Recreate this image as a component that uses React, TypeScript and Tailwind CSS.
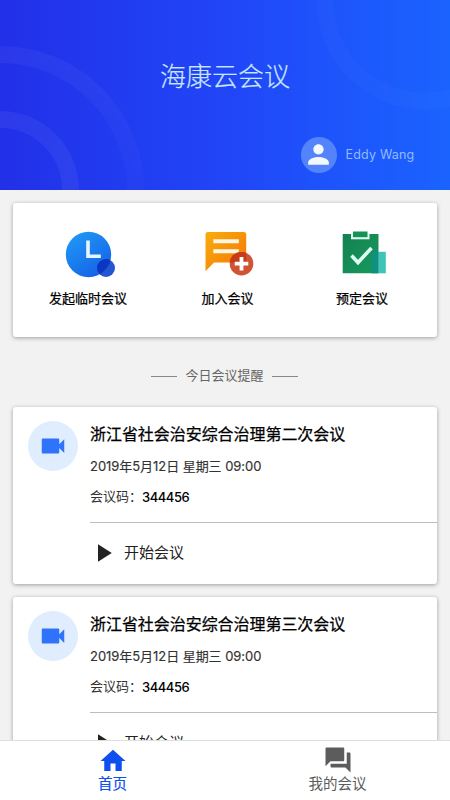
import { MdForum, MdHome, MdPerson, MdPlayArrow, MdVideocam } from "react-icons/md";

const ClockIcon = () => (
  <svg width="54" height="48" viewBox="0 0 54 48" aria-hidden="true">
    <defs>
      <linearGradient id="clock" x1="0.1" y1="0" x2="0.8" y2="1">
        <stop offset="0" stopColor="#1f9bf8" />
        <stop offset="1" stopColor="#1560e4" />
      </linearGradient>
      <clipPath id="clock-face">
        <circle cx="27.5" cy="24.5" r="22.7" />
      </clipPath>
    </defs>
    <circle cx="27.5" cy="24.5" r="22.7" fill="url(#clock)" />
    <circle cx="45" cy="38" r="9" fill="#2456cf" />
    <circle cx="45" cy="38" r="9" fill="#0b36c4" clipPath="url(#clock-face)" />
    <path d="M27 10.500v15.700h12.800" fill="none" stroke="#e6f6ff" strokeWidth="3.6" />
  </svg>
);

const JoinIcon = () => (
  <svg width="52" height="48" viewBox="0 0 52 48" aria-hidden="true">
    <defs>
      <linearGradient id="bubble" x1="0" y1="0" x2="1" y2="1">
        <stop offset="0" stopColor="#f9ae0b" />
        <stop offset="1" stopColor="#f47408" />
      </linearGradient>
      <clipPath id="bubble-shape">
        <path d="M6 2h35.700a2.500 2.500 0 0 1 2.500 2.500v25.600a2.500 2.500 0 0 1-2.500 2.500H12l-8.500 8.600V4.500A2.500 2.500 0 0 1 6 2z" />
      </clipPath>
    </defs>
    <rect x="3" y="1" width="42" height="41" fill="url(#bubble)" clipPath="url(#bubble-shape)" />
    <path d="M11.300 11.300h25.500M11.300 21.300h25.500" stroke="#fff6e4" strokeWidth="4" />
    <circle cx="39.500" cy="33.700" r="11.800" fill="#d05434" />
    <circle cx="39.500" cy="33.700" r="11.800" fill="#c53c16" clipPath="url(#bubble-shape)" />
    <path d="M39.500 26.900v13.600M32.700 33.700h13.600" stroke="#fff" strokeWidth="3.800" />
  </svg>
);

const BookIcon = () => (
  <svg width="52" height="48" viewBox="0 0 52 48" aria-hidden="true">
    <defs>
      <linearGradient id="board" x1="0" y1="0" x2="1" y2="1">
        <stop offset="0" stopColor="#138150" />
        <stop offset="1" stopColor="#18995f" />
      </linearGradient>
    </defs>
    <path d="M6.700 4h35.800v39.300H6.700z" fill="url(#board)" />
    <path d="M42.500 21.800h7.300v21.500h-7.300z" fill="#3ec5b8" />
    <path d="M35.500 21.800h7v21.500h-7z" fill="#109080" />
    <path d="M15 3h18.500v6.300H15z" fill="#e2fbf0" />
    <path d="M17 1.500h14.500v5.700H17z" fill="#169257" />
    <path d="M15.500 25.500l6.500 7L35.500 18" fill="none" stroke="#dcfff3" strokeWidth="3.600" />
  </svg>
);

const actions = [
  { label: "发起临时会议", icon: <ClockIcon />, className: "w-[150px]" },
  { label: "加入会议", icon: <JoinIcon />, className: "w-[129px]" },
  { label: "预定会议", icon: <BookIcon />, className: "w-[140px]" },
];

const meetings = [
  { id: 1, title: "浙江省社会治安综合治理第二次会议", date: "2019年5月12日 星期三 09:00", code: "344456" },
  { id: 2, title: "浙江省社会治安综合治理第三次会议", date: "2019年5月12日 星期三 09:00", code: "344456" },
];

function Header() {
  return (
    <header className="relative h-[190px] shrink-0 overflow-hidden bg-linear-to-r from-[#2230e8] via-[#2145f7] to-[#1a63ff]">
      <svg className="absolute inset-0" width="450" height="190" viewBox="0 0 450 190" fill="none" aria-hidden="true">
        <defs>
          <linearGradient id="ring" x1="0" y1="0" x2="0" y2="190" gradientUnits="userSpaceOnUse">
            <stop offset="0.3" stopColor="#fff" stopOpacity="0.04" />
            <stop offset="1" stopColor="#fff" stopOpacity="0.015" />
          </linearGradient>
        </defs>
        <circle cx="0" cy="190" r="135.500" stroke="url(#ring)" strokeWidth="17" />
        <circle cx="0" cy="190" r="70.500" stroke="#fff" strokeOpacity="0.05" strokeWidth="17" />
        <circle cx="425" cy="1" r="100" stroke="#fff" strokeOpacity="0.02" strokeWidth="17" />
      </svg>
      <div className="relative flex h-full flex-col">
        <h1 className="pt-[58px] text-center text-[26px] leading-[38px] font-light text-[#c9e6ff] [-webkit-text-stroke:0.2px_#c9e6ff]">海康云会议</h1>
        <div className="mt-[40.500px] flex items-center justify-end gap-[9px] pr-[34.500px]">
          <div className="flex size-9 items-center justify-center rounded-full bg-[#5484fb] text-[#f3f8ff]">
            <MdPerson className="size-[31px]" />
          </div>
          <span className="w-[70px] pt-[2px] font-['Inter','Liberation_Sans',sans-serif] text-[12.500px] tracking-[0.2px] whitespace-nowrap text-[#94bbff]">Eddy Wang</span>
        </div>
      </div>
    </header>
  );
}

function MeetingCard({ title, date, code }: { title: string; date: string; code: string }) {
  return (
    <article className="flex h-[177px] shrink-0 rounded-[3px] bg-white pl-[15px] shadow-[0_1px_4px_rgba(0,0,0,0.35)]">
      <div className="mt-[14px] flex size-[50px] shrink-0 items-center justify-center rounded-full bg-[#e0edfe] text-[#2f73fa]">
        <MdVideocam className="size-[30px]" />
      </div>
      <div className="ml-3 flex flex-1 flex-col">
        <h2 className="mt-[15px] text-[16px] leading-6 tracking-[-0.05px] text-black [-webkit-text-stroke:0.25px_#000]">{title}</h2>
        <p className="mt-[10px] text-[13px] leading-5 tracking-[-0.05px] text-[#333] [-webkit-text-stroke:0.15px_#333]">{date}</p>
        <p className="mt-[10px] flex text-[13px] leading-5 text-[#333]">
          <span className="w-[52px]">会议码：</span>
          <span className="pt-px text-[13px] font-medium tracking-[-0.450px] text-black">{code}</span>
        </p>
        <div className="mt-[15px] flex h-[61px] items-center gap-[6px] border-t border-[#bdbdbd]">
          <MdPlayArrow className="-ml-[2px] size-[30px] text-[#222]" />
          <span className="text-[15px] text-[#222]">开始会议</span>
        </div>
      </div>
    </article>
  );
}

export default function App() {
  return (
    <div className="flex h-[800px] w-[450px] flex-col overflow-hidden bg-[#f2f2f2] font-['Inter','Noto_Sans_CJK_SC',sans-serif]">
      <Header />
      <main className="flex min-h-0 flex-1 flex-col overflow-hidden px-[13px] pt-[13px]">
        <section className="flex h-[134px] shrink-0 rounded-[3px] bg-white shadow-[0_1px_4px_rgba(0,0,0,0.35)]">
          {actions.map((action) => (
            <div key={action.label} className={`flex flex-col items-center pt-[27px] ${action.className}`}>
              {action.icon}
              <span className="mt-[10px] text-[13px] leading-5 text-black [-webkit-text-stroke:0.25px_#000]">{action.label}</span>
            </div>
          ))}
        </section>
        <div className="flex h-[70px] shrink-0 items-center justify-center gap-2 pt-[8px] pr-px text-[13px] text-[#666]">
          <span className="h-px w-[26px] bg-[#888]" />
          <span>今日会议提醒</span>
          <span className="h-px w-[26px] bg-[#888]" />
        </div>
        <div className="flex flex-col gap-[13px]">
          {meetings.map((m) => (
            <MeetingCard key={m.id} title={m.title} date={m.date} code={m.code} />
          ))}
        </div>
      </main>
      <nav className="flex h-[60px] shrink-0 border-t border-[#dedede] bg-white text-[14.500px] leading-5">
        <div className="flex w-1/2 flex-col items-center pt-[5px] text-[#0f4fee]">
          <MdHome className="size-[30px]" />
          <span className="-mt-[2px] [-webkit-text-stroke:0.2px_#0f4fee]">首页</span>
        </div>
        <div className="flex w-1/2 flex-col items-center pt-[4px] text-[#5c5c5c]">
          <MdForum className="size-[30px]" />
          <span className="-mt-px">我的会议</span>
        </div>
      </nav>
    </div>
  );
}
